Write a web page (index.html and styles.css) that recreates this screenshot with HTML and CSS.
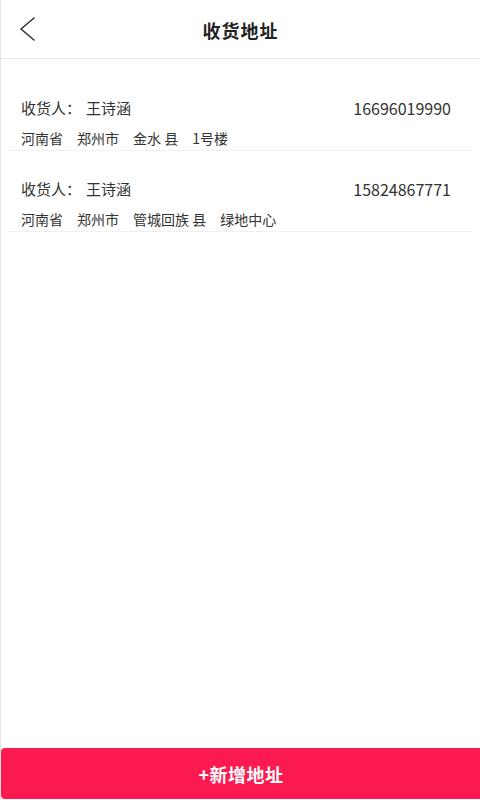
FILE: index.html
```html
<!DOCTYPE html>
<html lang="zh-CN">
<head>
<meta charset="utf-8">
<title>收货地址</title>
<link rel="stylesheet" href="styles.css">
</head>
<body>
<div class="page">
  <header class="header">
    <div class="back">
      <svg class="back-icon" width="16" height="24" viewBox="0 0 16 24"><polyline points="15,1 2,12 15,23" fill="none" stroke="#333" stroke-width="1.6" stroke-linecap="round" stroke-linejoin="round"/></svg>
    </div>
    <h1 class="title">收货地址</h1>
    <div></div>
  </header>
  <main class="list">
    <div class="item">
      <div class="row">
        <div class="name"><span>收货人：</span><span class="person">王诗涵</span></div>
        <div class="phone">16696019990</div>
      </div>
      <div class="addr"><span>河南省</span><span>郑州市</span><span>金水 县</span><span>1号楼</span></div>
    </div>
    <div class="item">
      <div class="row">
        <div class="name"><span>收货人：</span><span class="person">王诗涵</span></div>
        <div class="phone">15824867771</div>
      </div>
      <div class="addr"><span>河南省</span><span>郑州市</span><span>管城回族 县</span><span>绿地中心</span></div>
    </div>
  </main>
  <button class="add">+新增地址</button>
</div>
</body>
</html>
```
FILE: styles.css
```css
html, body {
  margin: 0;
  padding: 0;
  background: #fff;
}
body {
  font-family: "Noto Sans CJK SC", "Noto Sans", sans-serif;
  color: #333;
}
.page {
  width: 480px;
  height: 800px;
  box-sizing: border-box;
  border-left: 1px solid #e4e4e4;
  display: flex;
  flex-direction: column;
  overflow: hidden;
}
.header {
  height: 58px;
  flex: 0 0 58px;
  border-bottom: 1px solid #e8e8e8;
  display: grid;
  grid-template-columns: 60px 1fr 60px;
  align-items: center;
}
.back {
  padding-left: 18px;
  display: flex;
  align-items: center;
}
.back-icon {
  display: block;
}
.title {
  margin: 0;
  padding-top: 2px;
  text-align: center;
  font-size: 18px;
  font-weight: bold;
  color: #222;
  letter-spacing: 1px;
}
.list {
  flex: 1;
  margin-top: 10px;
}
.item {
  margin: 0 7px;
  padding: 29px 22px 2px 13px;
  border-bottom: 1px solid #f0f0f0;
}
.item + .item {
  padding-top: 28px;
}
.row {
  display: flex;
  justify-content: space-between;
  align-items: center;
  height: 20px;
}
.name {
  font-size: 15px;
  line-height: 20px;
  color: #333;
}
.person {
  margin-left: 5px;
}
.phone {
  font-size: 16px;
  line-height: 20px;
  color: #333;
}
.addr {
  margin-top: 10px;
  font-size: 14px;
  line-height: 20px;
  color: #333;
  display: flex;
  gap: 14px;
}
.add {
  flex: 0 0 51px;
  height: 51px;
  width: 484px;
  margin: 0 0 1px 0;
  border: none;
  border-radius: 4px;
  background: #fc1a51;
  color: #fff;
  font-family: "Noto Sans CJK SC", "Noto Sans", sans-serif;
  font-size: 18px;
  font-weight: bold;
  padding: 0 4px 0 0;
  letter-spacing: 0.5px;
}
```
